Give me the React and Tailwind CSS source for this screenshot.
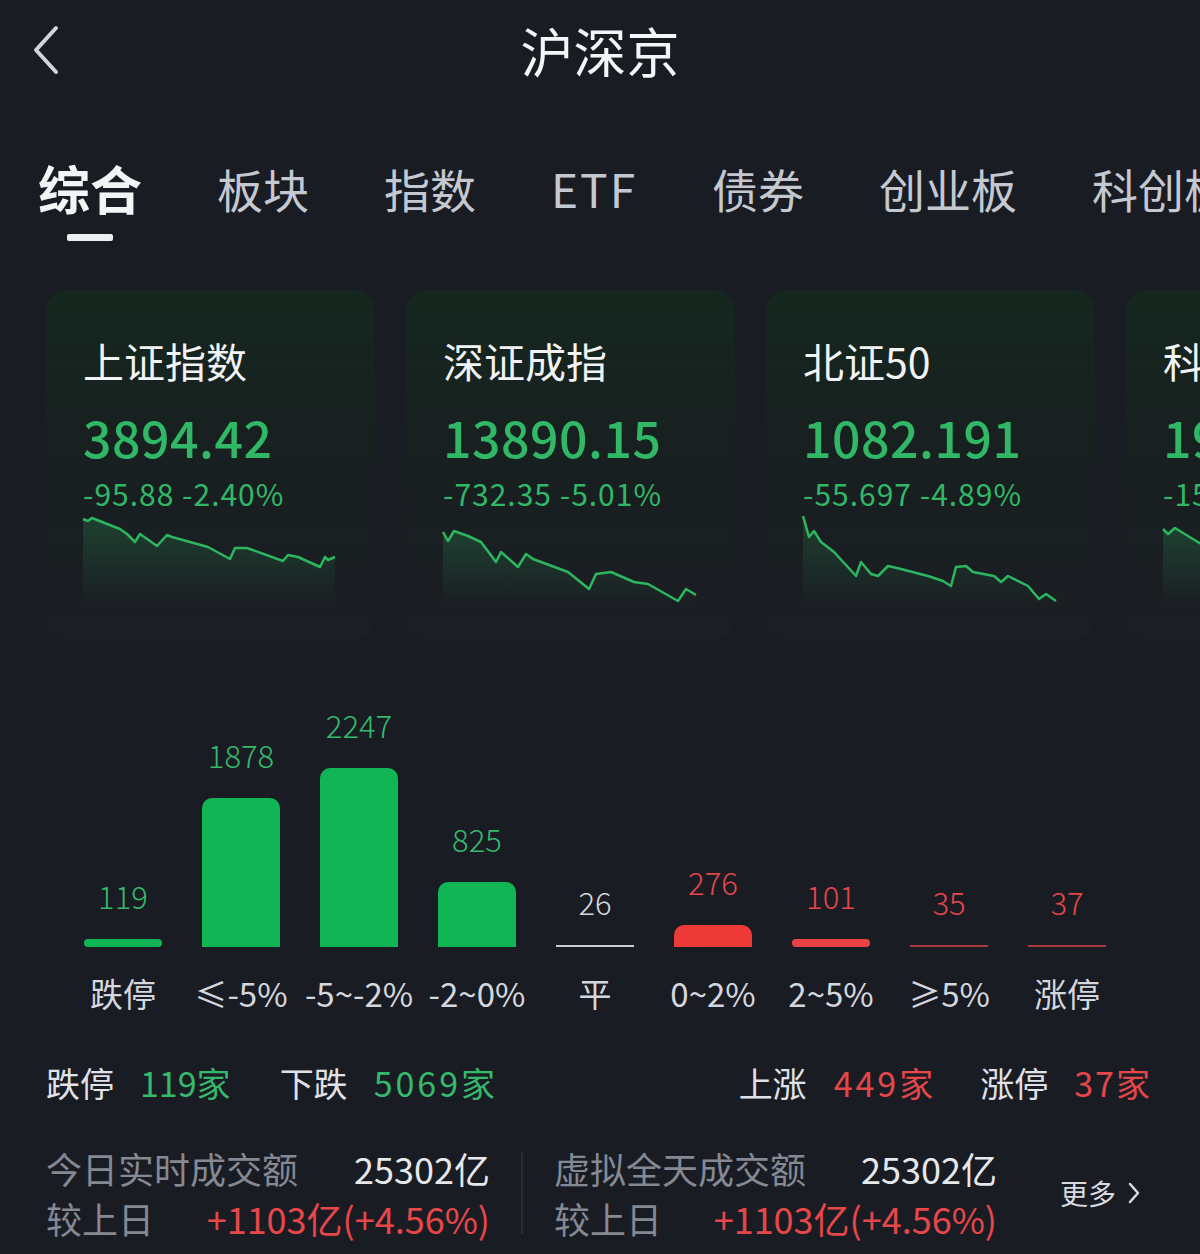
import React from 'react';

const FONT = { fontFamily: '"Noto Sans CJK SC", "Noto Sans", sans-serif' };

const tabs = ['综合', '板块', '指数', 'ETF', '债券', '创业板', '科创板'];

const cards = [
  {
    name: '上证指数',
    value: '3894.42',
    change: '-95.88 -2.40%',
    points: '0,5 5,7 9,4 37,15 44,20 52,28 57,20 74,32 84,21 89,23 125,33 147,45 152,34 164,34 200,47 205,41 215,43 237,53 242,43 245,46 252,43',
  },
  {
    name: '深证成指',
    value: '13890.15',
    change: '-732.35 -5.01%',
    points: '0,18 5,27 11,17 25,22 38,28 53,48 58,38 75,53 83,40 90,45 125,58 146,75 153,60 168,58 191,68 205,70 235,87 243,75 253,81',
  },
  {
    name: '北证50',
    value: '1082.191',
    change: '-55.697 -4.89%',
    points: '0,2 6,23 11,17 18,28 31,38 53,62 58,48 68,60 75,62 85,52 98,55 125,62 140,67 148,72 153,53 163,52 170,58 191,62 198,68 205,62 225,72 236,85 243,80 253,87',
  },
  {
    name: '科创50',
    value: '1987.36',
    change: '-152.40 -7.12%',
    points: '0,15 5,20 12,14 38,30 50,38 60,33 80,45 100,50 130,60 160,66 190,72 220,78 250,84',
  },
];

const bars = [
  { num: '119', label: '跌停', kind: 'pill-green' },
  { num: '1878', label: '≤-5%', kind: 'green', h: 'h-[149px]' },
  { num: '2247', label: '-5~-2%', kind: 'green', h: 'h-[179px]' },
  { num: '825', label: '-2~0%', kind: 'green', h: 'h-[65px]' },
  { num: '26', label: '平', kind: 'flat' },
  { num: '276', label: '0~2%', kind: 'red', h: 'h-[22px]' },
  { num: '101', label: '2~5%', kind: 'pill-red' },
  { num: '35', label: '≥5%', kind: 'line-red' },
  { num: '37', label: '涨停', kind: 'line-red' },
];

function Spark({ points, id }) {
  const pts = points.split(' ');
  const last = pts[pts.length - 1].split(',')[0];
  const area = `0,90 ${points} ${last},90`;
  return (
    <svg width="255" height="90" viewBox="0 0 255 90" className="block overflow-visible">
      <defs>
        <linearGradient id={id} x1="0" y1="0" x2="0" y2="1">
          <stop offset="0%" stopColor="#2fb865" stopOpacity="0.22" />
          <stop offset="100%" stopColor="#2fb865" stopOpacity="0" />
        </linearGradient>
      </defs>
      <polygon points={area} fill={`url(#${id})`} />
      <polyline points={points} fill="none" stroke="#2db660" strokeWidth="2.5" strokeLinejoin="round" />
    </svg>
  );
}

function Bar({ kind, h }) {
  if (kind === 'pill-green') return <div className="w-[78px] h-[8px] rounded-full bg-[#12b556]" />;
  if (kind === 'green') return <div className={`w-[78px] ${h} rounded-t-[10px] bg-[#12b556]`} />;
  if (kind === 'flat') return <div className="w-[78px] h-[2px] bg-[#c9ccd4]" />;
  if (kind === 'red') return <div className={`w-[78px] ${h} rounded-t-[10px] bg-[#ef3a3a]`} />;
  if (kind === 'pill-red') return <div className="w-[78px] h-[8px] rounded-full bg-[#e94343]" />;
  return <div className="w-[78px] h-[2px] bg-[#a7383c]" />;
}

export default function App() {
  return (
    <div style={FONT} className="w-[1200px] h-[1254px] overflow-hidden bg-[#1a1c23] text-white">
      {/* header */}
      <div className="relative h-[100px] flex items-center justify-center">
        <svg width="30" height="50" viewBox="0 0 30 50" className="absolute left-[31px] top-[25px]">
          <polyline points="25,3 5,25 25,47" fill="none" stroke="#d3d5db" strokeWidth="4" strokeLinecap="round" strokeLinejoin="round" />
        </svg>
        <div className="text-[53px] leading-[60px] text-[#f4f5f7]">沪深京</div>
      </div>

      {/* tabs */}
      <div className="pt-[56px] pl-[38px]">
        <div className="flex items-center gap-[75px] whitespace-nowrap">
          {tabs.map((t, i) => (
            <div
              key={t}
              className={
                i === 0
                  ? 'text-[52px] leading-[64px] font-bold text-[#f3f4f6]'
                  : t === 'ETF'
                  ? 'text-[46px] leading-[64px] text-[#c4c8d1] tracking-[2px]'
                  : 'text-[46px] leading-[64px] text-[#c4c8d1]'
              }
            >
              {t}
            </div>
          ))}
        </div>
        <div className="mt-[14px] ml-[29px] w-[46px] h-[7px] rounded-[2px] bg-[#eceef2]" />
      </div>

      {/* index cards */}
      <div className="mt-[49px] pl-[46px] flex gap-[31px]">
        {cards.map((c, i) => (
          <div
            key={c.name}
            className="w-[329px] h-[350px] shrink-0 rounded-[22px] bg-gradient-to-b from-[#15271f] via-[#181f20] to-[#1b1e24] pl-[37px] pt-[46px]"
          >
            <div className="text-[41px] leading-[48px] text-[#f1f3f5] whitespace-nowrap">{c.name}</div>
            <div className="mt-[24px] text-[50px] leading-[56px] font-medium text-[#30b867] whitespace-nowrap tracking-[0.5px]">{c.value}</div>
            <div className="mt-[11px] text-[30px] leading-[36px] text-[#30b867] whitespace-nowrap tracking-[1px]">{c.change}</div>
            <div className="mt-[3px]">
              <Spark points={c.points} id={`g${i}`} />
            </div>
          </div>
        ))}
      </div>

      {/* distribution chart */}
      <div className="mt-[70px] pl-[64px] flex items-end h-[237px]">
        {bars.map((b) => (
          <div key={b.label} className="w-[118px] flex flex-col items-center">
            <div
              className={`text-[31px] leading-[30px] font-light mb-[28px] ${
                b.kind.includes('green') ? 'text-[#35b96b]' : b.kind === 'flat' ? 'text-[#d6d8de]' : 'text-[#e5464a]'
              }`}
            >
              {b.num}
            </div>
            <Bar kind={b.kind} h={b.h} />
          </div>
        ))}
      </div>
      <div className="mt-[30px] pl-[64px] flex">
        {bars.map((b) => (
          <div key={b.label} className="w-[118px] text-center text-[33px] leading-[32px] text-[#d4d7de] whitespace-nowrap">
            {b.label}
          </div>
        ))}
      </div>

      {/* summary */}
      <div className="mt-[54px] px-[46px] flex justify-between text-[34px] leading-[40px] whitespace-nowrap">
        <div className="flex">
          <span className="text-[#e0e2e7]">跌停</span>
          <span className="ml-[26px] text-[#35b96b]">119家</span>
          <span className="ml-[49px] text-[#e0e2e7]">下跌</span>
          <span className="ml-[26px] text-[#35b96b] tracking-[3px]">5069家</span>
        </div>
        <div className="flex pr-[2px]">
          <span className="text-[#e0e2e7]">上涨</span>
          <span className="ml-[27px] text-[#e5464a] tracking-[3px]">449家</span>
          <span className="ml-[44px] text-[#e0e2e7]">涨停</span>
          <span className="ml-[26px] text-[#e5464a] tracking-[2px]">37家</span>
        </div>
      </div>

      {/* turnover */}
      <div className="mt-[40px] pl-[46px] flex items-center text-[36px] leading-[50px] whitespace-nowrap">
        <div className="w-[444px]">
          <div className="flex justify-between">
            <span className="text-[#848994]">今日实时成交额</span>
            <span className="text-[#e6e8ec]">25302亿</span>
          </div>
          <div className="flex justify-between">
            <span className="text-[#848994]">较上日</span>
            <span className="text-[#e8474a]">+1103亿(+4.56%)</span>
          </div>
        </div>
        <div className="mx-[31px] w-[2px] h-[82px] bg-[#2a2d35]" />
        <div className="w-[443px]">
          <div className="flex justify-between">
            <span className="text-[#848994]">虚拟全天成交额</span>
            <span className="text-[#e6e8ec]">25302亿</span>
          </div>
          <div className="flex justify-between">
            <span className="text-[#848994]">较上日</span>
            <span className="text-[#e8474a]">+1103亿(+4.56%)</span>
          </div>
        </div>
        <div className="ml-[63px] flex items-center gap-[12px] text-[28px] leading-[34px] text-[#d9dbe0]">
          <span>更多</span>
          <svg width="12" height="22" viewBox="0 0 12 22">
            <polyline points="2,2 10,11 2,20" fill="none" stroke="#d9dbe0" strokeWidth="2.5" strokeLinecap="round" strokeLinejoin="round" />
          </svg>
        </div>
      </div>
    </div>
  );
}
